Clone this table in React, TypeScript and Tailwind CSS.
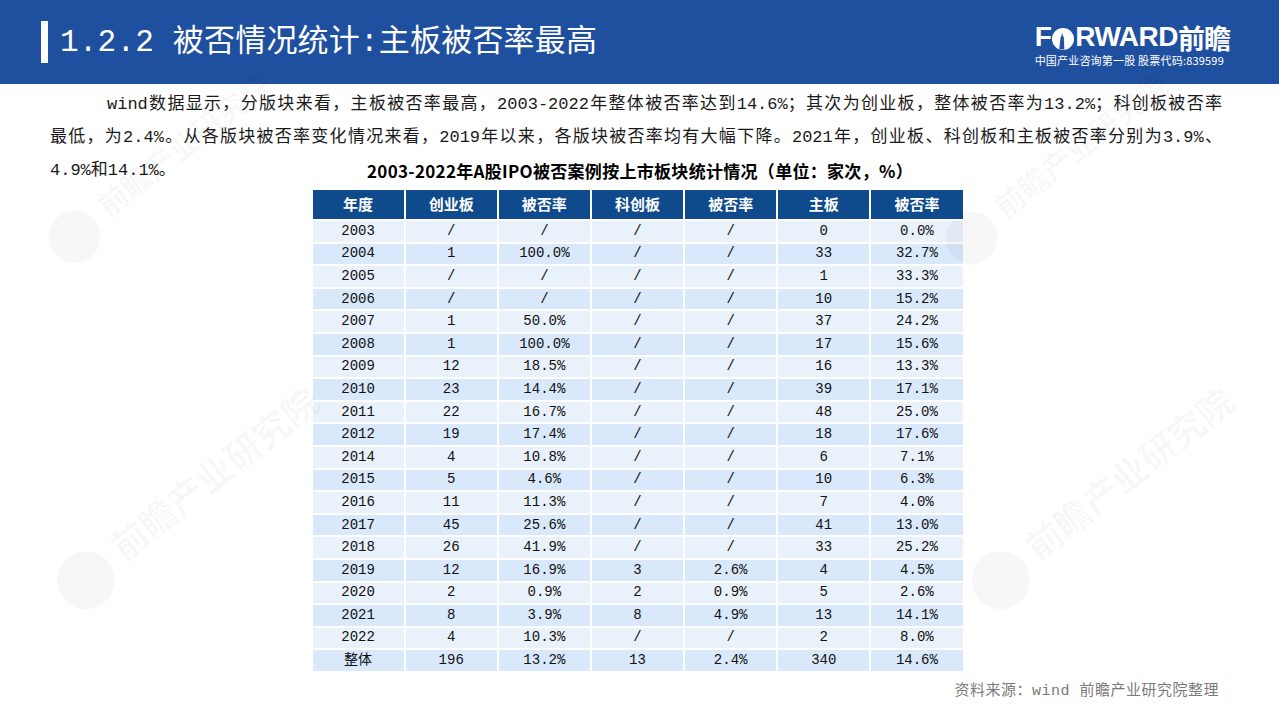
import React from 'react';

const rows: string[][] = [
  ['2003', '/', '/', '/', '/', '0', '0.0%'],
  ['2004', '1', '100.0%', '/', '/', '33', '32.7%'],
  ['2005', '/', '/', '/', '/', '1', '33.3%'],
  ['2006', '/', '/', '/', '/', '10', '15.2%'],
  ['2007', '1', '50.0%', '/', '/', '37', '24.2%'],
  ['2008', '1', '100.0%', '/', '/', '17', '15.6%'],
  ['2009', '12', '18.5%', '/', '/', '16', '13.3%'],
  ['2010', '23', '14.4%', '/', '/', '39', '17.1%'],
  ['2011', '22', '16.7%', '/', '/', '48', '25.0%'],
  ['2012', '19', '17.4%', '/', '/', '18', '17.6%'],
  ['2014', '4', '10.8%', '/', '/', '6', '7.1%'],
  ['2015', '5', '4.6%', '/', '/', '10', '6.3%'],
  ['2016', '11', '11.3%', '/', '/', '7', '4.0%'],
  ['2017', '45', '25.6%', '/', '/', '41', '13.0%'],
  ['2018', '26', '41.9%', '/', '/', '33', '25.2%'],
  ['2019', '12', '16.9%', '3', '2.6%', '4', '4.5%'],
  ['2020', '2', '0.9%', '2', '0.9%', '5', '2.6%'],
  ['2021', '8', '3.9%', '8', '4.9%', '13', '14.1%'],
  ['2022', '4', '10.3%', '/', '/', '2', '8.0%'],
  ['整体', '196', '13.2%', '13', '2.4%', '340', '14.6%'],
];

const heads = ['年度', '创业板', '被否率', '科创板', '被否率', '主板', '被否率'];

const mono = "font-['Liberation_Mono','Noto_Sans_CJK_SC',monospace]";

function LogoO() {
  return (
    <svg width="22" height="22" viewBox="0 0 22 22" className="mx-[1px] mb-[1px]">
      <circle cx="11" cy="11" r="11" fill="#ffffff" />
      <path d="M7.2 21.2 L8.6 9.5 L9.6 7.6 L10.2 4.6 L10.8 7.6 L11.8 9.5 L12.4 21.6 Z" fill="#1f4f9f" />
    </svg>
  );
}

function Watermark({ className, big }: { className: string; big?: boolean }) {
  return (
    <div className={`pointer-events-none absolute flex origin-left -rotate-[38deg] items-center gap-3 whitespace-nowrap ${className}`}>
      <div className={big ? 'h-[58px] w-[58px] rounded-full bg-black/[0.03]' : 'h-[52px] w-[52px] rounded-full bg-black/[0.03]'} />
      <div className="flex flex-col leading-none text-black/[0.03]">
        <span className={big ? 'text-[36px] font-bold' : 'text-[30px] font-bold'}>前瞻产业研究院</span>
        <span className={big ? 'mt-1 text-[11px] tracking-[4px]' : 'mt-1 text-[10px] tracking-[3px]'}>中国产业咨询领导者(股票:839599)</span>
      </div>
    </div>
  );
}

export default function App() {
  return (
    <div className="relative h-[719px] w-[1279px] overflow-hidden bg-white font-['Noto_Sans_CJK_SC',sans-serif]">
      {/* title bar */}
      <header className="flex h-[84px] items-center justify-between bg-[#1f4f9f] pl-[41px] pr-[49px]">
        <div className="flex items-center gap-[12px]">
          <div className="h-[42px] w-[7px] bg-white" />
          <h1 className={`${mono} text-[31px] leading-none tracking-[0.2px] text-white`}>1.2.2 被否情况统计:主板被否率最高</h1>
        </div>
        <div className="flex flex-col items-start pt-[4px] text-white">
          <div className="flex items-end text-[28px] font-semibold leading-none tracking-[-0.5px] font-['Liberation_Sans','Noto_Sans_CJK_SC',sans-serif]">
            <span>F</span>
            <LogoO />
            <span>RWARD</span>
            <span className="text-[27px] font-bold tracking-[-1px] font-['Noto_Sans_CJK_SC',sans-serif]">前瞻</span>
          </div>
          <div className="mt-[4px] text-[11px] leading-none tracking-[0.2px]">中国产业咨询第一股 股票代码:839599</div>
        </div>
      </header>

      {/* body text */}
      <div className={`${mono} mt-[4px] pl-[50px] pr-[57px] text-[17px] leading-[33px] text-[#1a1a1a]`}>
        <p className="indent-[57px] text-justify [text-align-last:justify]">
          wind数据显示，分版块来看，主板被否率最高，2003-2022年整体被否率达到14.6%；其次为创业板，整体被否率为13.2%；科创板被否率
        </p>
        <p className="text-justify [text-align-last:justify]">
          最低，为2.4%。从各版块被否率变化情况来看，2019年以来，各版块被否率均有大幅下降。2021年，创业板、科创板和主板被否率分别为3.9%、
        </p>
        <div className="grid">
          <span className="col-start-1 row-start-1 justify-self-start">4.9%和14.1%。</span>
          <span className="col-start-1 row-start-1 ml-[317px] justify-self-start font-['Noto_Sans_CJK_SC',sans-serif] text-[17px] font-bold tracking-[0.3px] text-black">
            2003-2022年A股IPO被否案例按上市板块统计情况（单位：家次，%）
          </span>
        </div>
      </div>

      {/* table */}
      <div className="mt-[3px] flex justify-center pr-[4px]">
        <div className="grid w-[650px] grid-cols-7 gap-[2px] bg-white">
          {heads.map((h, i) => (
            <div key={i} className="flex h-[29px] items-center justify-center bg-[#0f4b8c] text-[15px] font-bold text-white">
              {h}
            </div>
          ))}
          {rows.map((r, ri) =>
            r.map((c, ci) => (
              <div
                key={`${ri}-${ci}`}
                className={`${mono} flex h-[20.6px] items-center justify-center text-[14px] text-[#111] ${ri % 2 === 0 ? 'bg-[#e9f1fa]' : 'bg-[#d9e8fb]'}`}
              >
                {c}
              </div>
            ))
          )}
        </div>
      </div>

      {/* source */}
      <div className={`${mono} mt-[13px] flex justify-end pr-[60px] text-[15px] leading-none tracking-[0.5px] text-[#7a7a7a]`}>
        资料来源：wind 前瞻产业研究院整理
      </div>

      {/* watermarks */}
      <Watermark className="left-[54px] top-[227px]" />
      <Watermark className="left-[951px] top-[228px]" />
      <Watermark big className="left-[63px] top-[569px]" />
      <Watermark big className="left-[978px] top-[569px]" />
    </div>
  );
}
